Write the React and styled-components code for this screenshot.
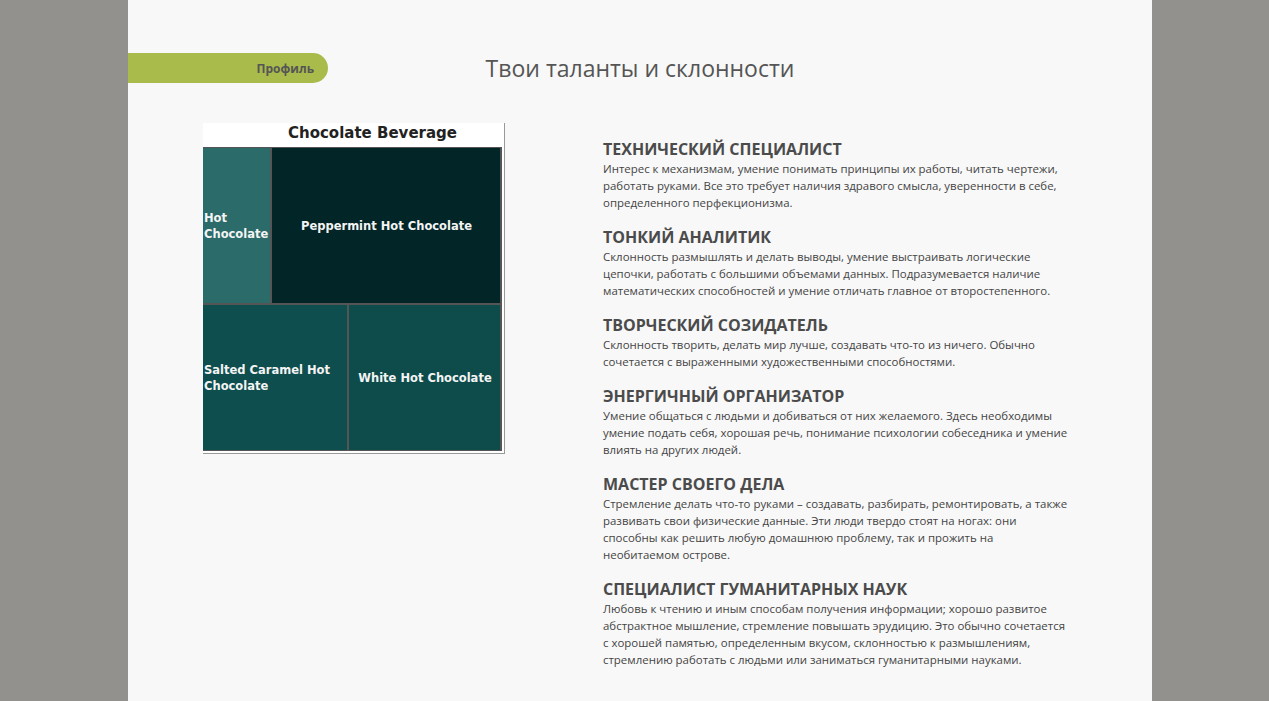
import React from "react";
import styled, { createGlobalStyle } from "styled-components";

const Global = createGlobalStyle`
  html, body { margin: 0; padding: 0; background: #92918e; }
  body { font-family: "Open Sans", "Noto Sans", sans-serif; }
  * { box-sizing: border-box; }
`;

const Page = styled.div`
  width: 1024px;
  min-height: 100vh;
  margin-left: 128px;
  background: #f8f8f8;
  padding-top: 53px;
`;

const Header = styled.header`
  display: grid;
  grid-template-columns: 200px 1fr 200px;
  align-items: center;
  height: 30px;
`;

const Pill = styled.div`
  height: 30px;
  background: #a9bb4b;
  border-radius: 0 15px 15px 0;
  display: flex;
  align-items: center;
  justify-content: flex-end;
  padding-right: 14px;
  font-family: "Open Sans", sans-serif;
  font-weight: 700;
  font-size: 12px;
  color: #555;
`;

const Title = styled.h1`
  margin: 0;
  text-align: center;
  font-family: "Open Sans", sans-serif;
  font-weight: 400;
  font-size: 23px;
  color: #555;
  line-height: 30px;
`;

const Content = styled.main`
  display: flex;
  align-items: flex-start;
  padding: 40px 0 30px 75px;
  gap: 98px;
`;

const Chart = styled.div`
  width: 302px;
  background: #fff;
  padding: 0 2px 2px 0;
  border-right: 1px solid #999;
  border-bottom: 1px solid #999;
  flex-shrink: 0;
`;

const ChartTitle = styled.div`
  height: 24px;
  padding-left: 40px;
  text-align: center;
  font-family: "DejaVu Sans", Verdana, sans-serif;
  font-weight: 700;
  font-size: 15px;
  line-height: 20px;
  color: #222;
`;

const Cells = styled.div`
  display: grid;
  grid-template-columns: ${(p) => p.$cols};
  gap: 2px;
  background: #555;
  padding: ${(p) => p.$pad};
`;

const Cell = styled.div`
  height: ${(p) => p.$h}px;
  background: ${(p) => p.$bg};
  display: flex;
  align-items: center;
  justify-content: ${(p) => (p.$center ? "center" : "flex-start")};
  text-align: ${(p) => (p.$center ? "center" : "left")};
  padding-left: 1px;
  font-family: "DejaVu Sans", Verdana, sans-serif;
  font-weight: 700;
  font-size: 11.5px;
  line-height: 16px;
  color: #f4f4f4;
`;

const Column = styled.section`
  width: 490px;
  padding-top: 16px;
`;

const Item = styled.article`
  & + & { margin-top: 16px; }
`;

const Heading = styled.h2`
  margin: 0 0 1px;
  font-family: "Open Sans", sans-serif;
  font-weight: 700;
  font-size: 16px;
  line-height: 20px;
  color: #4b4b4b;
`;

const Body = styled.p`
  margin: 0;
  font-family: "Open Sans", sans-serif;
  font-size: 11.45px;
  line-height: 17px;
  color: #444;
  white-space: pre-line;
`;

const items = [
  {
    title: "ТЕХНИЧЕСКИЙ СПЕЦИАЛИСТ",
    lines: [
      "Интерес к механизмам, умение понимать принципы их работы, читать чертежи,",
      "работать руками. Все это требует наличия здравого смысла, уверенности в себе,",
      "определенного перфекционизма.",
    ],
  },
  {
    title: "ТОНКИЙ АНАЛИТИК",
    lines: [
      "Склонность размышлять и делать выводы, умение выстраивать логические",
      "цепочки, работать с большими объемами данных. Подразумевается наличие",
      "математических способностей и умение отличать главное от второстепенного.",
    ],
  },
  {
    title: "ТВОРЧЕСКИЙ СОЗИДАТЕЛЬ",
    lines: [
      "Склонность творить, делать мир лучше, создавать что-то из ничего. Обычно",
      "сочетается с выраженными художественными способностями.",
    ],
  },
  {
    title: "ЭНЕРГИЧНЫЙ ОРГАНИЗАТОР",
    lines: [
      "Умение общаться с людьми и добиваться от них желаемого. Здесь необходимы",
      "умение подать себя, хорошая речь, понимание психологии собеседника и умение",
      "влиять на других людей.",
    ],
  },
  {
    title: "МАСТЕР СВОЕГО ДЕЛА",
    lines: [
      "Стремление делать что-то руками – создавать, разбирать, ремонтировать, а также",
      "развивать свои физические данные. Эти люди твердо стоят на ногах: они",
      "способны как решить любую домашнюю проблему, так и прожить на",
      "необитаемом острове.",
    ],
  },
  {
    title: "СПЕЦИАЛИСТ ГУМАНИТАРНЫХ НАУК",
    lines: [
      "Любовь к чтению и иным способам получения информации; хорошо развитое",
      "абстрактное мышление, стремление повышать эрудицию. Это обычно сочетается",
      "с хорошей памятью, определенным вкусом, склонностью к размышлениям,",
      "стремлению работать с людьми или заниматься гуманитарными науками.",
    ],
  },
];

export default function App() {
  return (
    <>
      <Global />
      <Page>
        <Header>
          <Pill>Профиль</Pill>
          <Title>Твои таланты и склонности</Title>
          <div />
        </Header>
        <Content>
          <Chart>
            <ChartTitle>Chocolate Beverage</ChartTitle>
            <Cells $cols="67px 228px" $pad="1px 1px 0 0">
              <Cell $h={155} $bg="#2b6b6a">
                Hot
                <br />
                Chocolate
              </Cell>
              <Cell $h={155} $bg="#022627" $center>
                Peppermint Hot Chocolate
              </Cell>
            </Cells>
            <Cells $cols="144px 151px" $pad="2px 1px 1px 0">
              <Cell $h={145} $bg="#0f4e4e">
                Salted Caramel Hot
                <br />
                Chocolate
              </Cell>
              <Cell $h={145} $bg="#0d4c4b" $center>
                White Hot Chocolate
              </Cell>
            </Cells>
          </Chart>
          <Column>
            {items.map((it) => (
              <Item key={it.title}>
                <Heading>{it.title}</Heading>
                <Body>{it.lines.join("\n")}</Body>
              </Item>
            ))}
          </Column>
        </Content>
      </Page>
    </>
  );
}
